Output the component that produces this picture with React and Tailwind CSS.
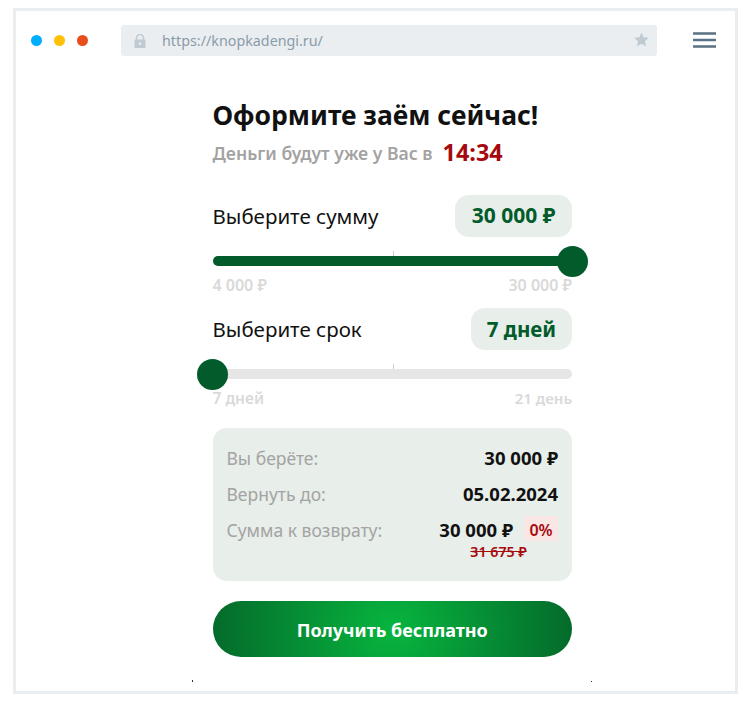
import React from 'react';

const font = { fontFamily: '"Noto Sans", sans-serif' };

function LockIcon() {
  return (
    <svg width="12" height="14" viewBox="0 0 12 14" className="shrink-0">
      <path d="M2.5 6V4a3.5 3.5 0 0 1 7 0v2" fill="none" stroke="#bfcad2" strokeWidth="1.6" />
      <rect x="0.5" y="5.5" width="11" height="8.5" rx="1" fill="#bfcad2" />
      <circle cx="6" cy="9.7" r="1.3" fill="#ebeef1" />
    </svg>
  );
}

function StarIcon() {
  return (
    <svg width="15" height="15" viewBox="0 0 14 14" className="shrink-0 block">
      <path d="M7 0.5l2 4.4 4.8.5-3.6 3.2 1 4.7L7 10.9l-4.2 2.4 1-4.7L.2 5.4 5 4.9z" fill="#bfcad2" />
    </svg>
  );
}

function MenuIcon() {
  return (
    <svg width="23" height="16" viewBox="0 0 23 16" className="ml-auto shrink-0 -mt-[1px]">
      <path d="M0 1.5h23M0 8h23M0 14.5h23" stroke="#5a7282" strokeWidth="2.5" />
    </svg>
  );
}

function Slider({ label, value, min, max, atEnd, valueClass, minSize, maxSize }) {
  return (
    <div className="flex flex-col">
      <div className="flex items-center justify-between h-[42px]">
        <span className="text-[20.5px] leading-[28px] text-[#111]">{label}</span>
        <span className={`flex items-center justify-center h-[42px] rounded-[14px] bg-[#e8eeea] font-bold text-[#025b2b] ${valueClass}`}>
          {value}
        </span>
      </div>
      <div className="relative h-[10px] mt-[19px] rounded-full bg-[#e6e6e6]">
        {atEnd && <div className="absolute inset-0 rounded-full bg-[#025b2b]" />}
        <div className="absolute left-[180px] top-[-5px] w-px h-[5px] bg-[#cfcfcf]" />
        <div className={`absolute top-[-10px] w-[31px] h-[31px] rounded-full bg-[#025b2b] ${atEnd ? 'right-[-16px]' : 'left-[-16px]'}`} />
      </div>
      <div className="flex justify-between mt-[8px] leading-[22px] font-semibold text-[#d9d9d9]">
        <span className={minSize}>{min}</span>
        <span className={maxSize}>{max}</span>
      </div>
    </div>
  );
}

export default function App() {
  return (
    <div className="relative w-[751px] h-[709px] bg-white pt-[8px] pl-[13px]" style={font}>
      <div className="w-[725px] h-[686px] border-[3px] border-[#ebeef1] flex flex-col">
        <div className="flex items-center h-[31px] mt-[14px] pl-[15px] pr-[19px]">
          <div className="flex items-center gap-[12px] -mt-[1px]">
            <span className="w-[11px] h-[11px] rounded-full bg-[#00aeff]" />
            <span className="w-[11px] h-[11px] rounded-full bg-[#ffc107]" />
            <span className="w-[11px] h-[11px] rounded-full bg-[#e84e1b]" />
          </div>
          <div className="flex items-center h-[31px] w-[536px] ml-[33px] pl-[13px] pr-[8px] rounded-[3px] bg-[#ebeef1]">
            <LockIcon />
            <span className="ml-[16px] text-[14.3px] text-[#8a9ba8]">https://knopkadengi.ru/</span>
            <span className="ml-auto -mt-[3px]"><StarIcon /></span>
          </div>
          <MenuIcon />
        </div>

        <div className="w-[359.5px] ml-[196.5px] mt-[40px] flex flex-col">
          <h1 className="text-[26.5px] leading-[38px] font-bold text-[#111]">Оформите заём сейчас!</h1>
          <div className="flex items-center h-[36px] mt-[1px]">
            <span className="text-[17.6px] font-semibold text-[#a3a3a3]">Деньги будут уже у Вас в</span>
            <span className="ml-[10px] text-[23.4px] font-bold text-[#a60a0f]">14:34</span>
          </div>

          <div className="mt-[24px]">
            <Slider label="Выберите сумму" value="30 000 ₽" min="4 000 ₽" max="30 000 ₽" atEnd valueClass="w-[117px] text-[21px]" minSize="text-[16px]" maxSize="text-[16px]" />
          </div>
          <div className="mt-[12px]">
            <Slider label="Выберите срок" value="7 дней" min="7 дней" max="21 день" valueClass="w-[101px] text-[20.5px]" minSize="text-[15.5px]" maxSize="text-[15px]" />
          </div>

          <div className="mt-[19px] h-[153px] rounded-[14px] bg-[#e8eeea] px-[14px] pt-[14px]">
            <div className="flex justify-between items-center h-[32px]">
              <span className="text-[17.5px] text-[#a3a3a3]">Вы берёте:</span>
              <span className="text-[18.5px] font-bold text-[#111]">30 000 ₽</span>
            </div>
            <div className="flex justify-between items-center h-[32px] mt-[4px]">
              <span className="text-[17.5px] text-[#a3a3a3]">Вернуть до:</span>
              <span className="text-[18.5px] font-bold text-[#111]">05.02.2024</span>
            </div>
            <div className="flex justify-between items-start mt-[4px]">
              <span className="text-[17.5px] leading-[32px] text-[#a3a3a3]">Сумма к возврату:</span>
              <div className="flex flex-col items-start">
                <div className="flex items-center h-[32px]">
                  <span className="text-[18.5px] font-bold text-[#111]">30 000 ₽</span>
                  <span className="ml-[11px] -mt-[4px] pt-[3px] flex items-center justify-center w-[34px] h-[25px] bg-[#fbe6e6] rounded-[2px] text-[16px] font-semibold text-[#a60a0f]">0%</span>
                </div>
                <span className="ml-[31px] -mt-[3px] text-[14.2px] leading-[18px] font-semibold text-[#a60a0f] line-through">31 675 ₽</span>
              </div>
            </div>
          </div>

          <button className="mt-[20px] h-[56px] pt-[2px] rounded-full text-white text-[18px] font-bold bg-[radial-gradient(circle_farthest-side,#07b53f_0%,#046b2b_100%)]">
            Получить бесплатно
          </button>
        </div>
      </div>
      <span className="absolute left-[192px] top-[680px] w-px h-[2px] bg-[#333]" />
      <span className="absolute left-[591px] top-[681px] w-px h-px bg-[#333]" />
    </div>
  );
}
